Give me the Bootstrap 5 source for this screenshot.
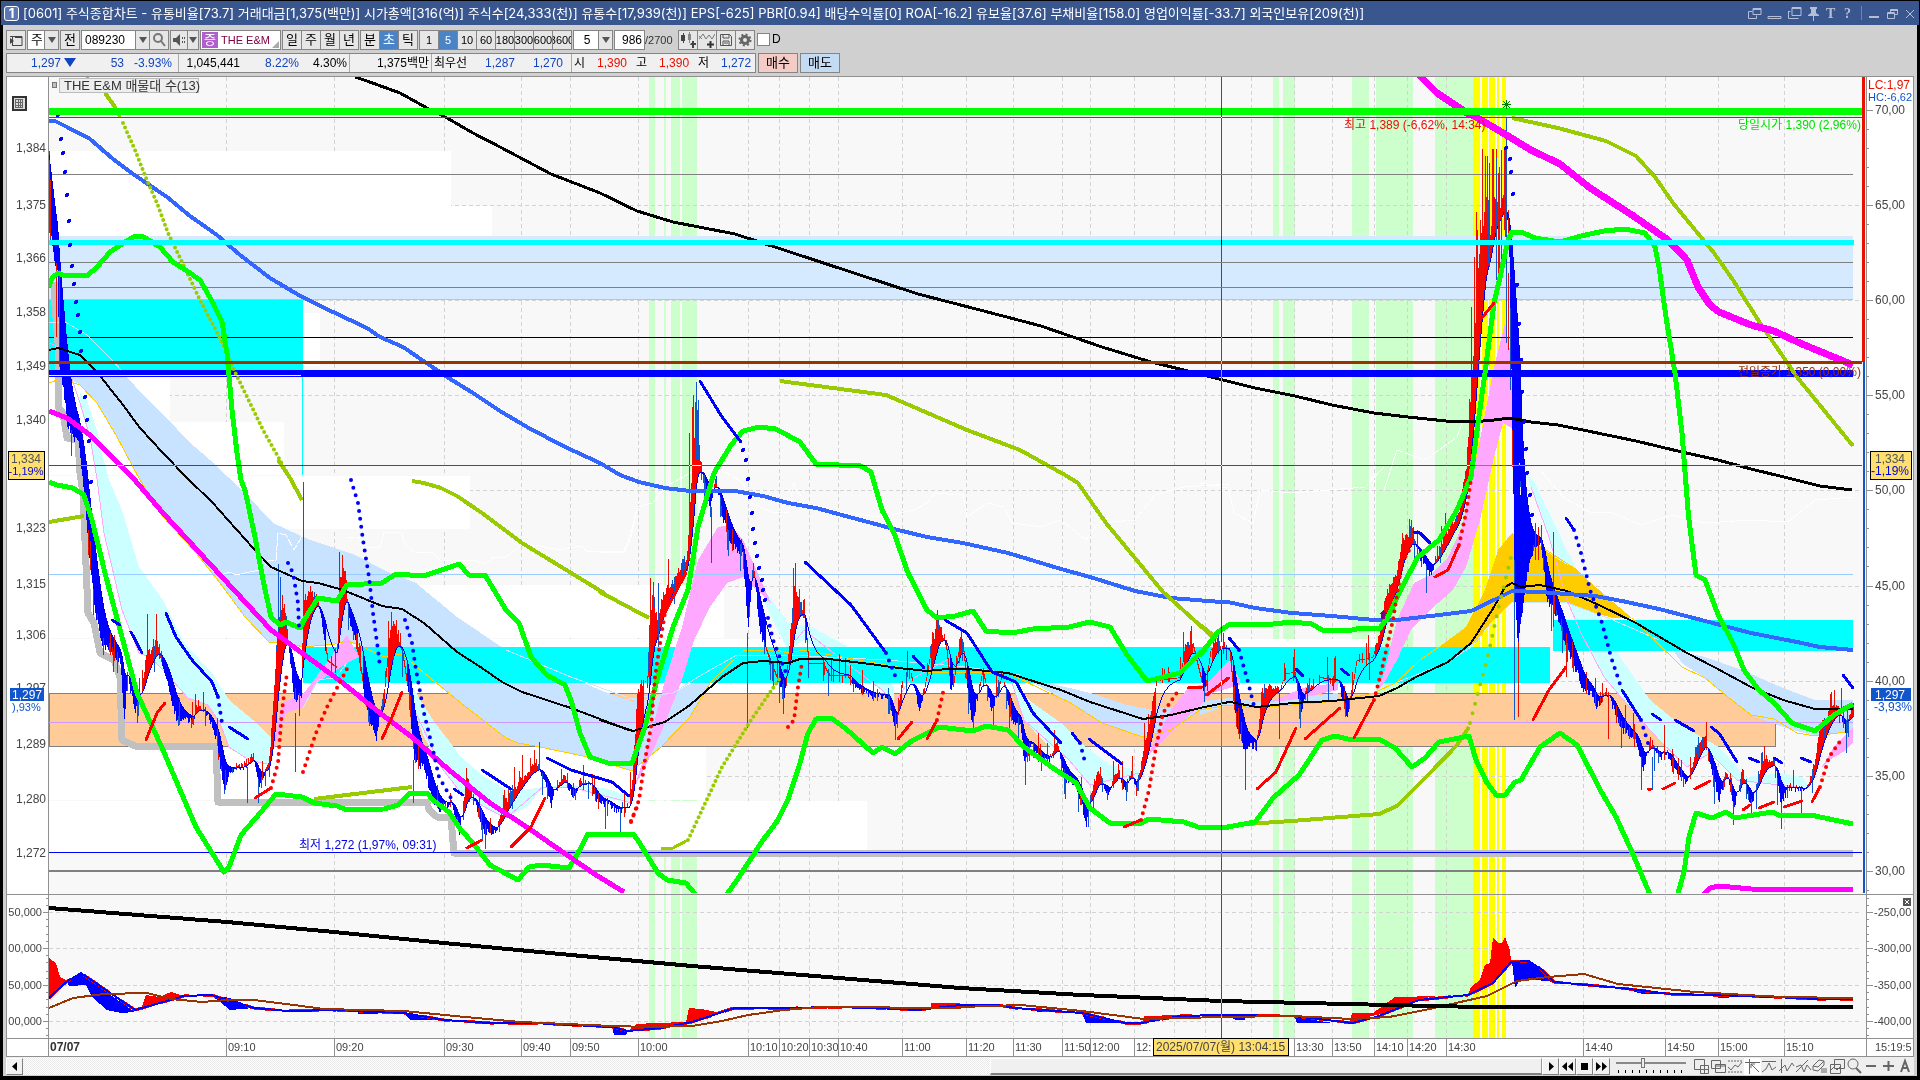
<!DOCTYPE html>
<html lang="ko">
<head>
<meta charset="utf-8">
<meta name="viewport" content="width=device-width, initial-scale=1">
<title>[0601] 주식종합차트</title>
<link href="https://cdn.jsdelivr.net/npm/bootstrap@5.3.0/dist/css/bootstrap.min.css" rel="stylesheet">
<style>
:root{--ui:"Liberation Sans","Noto Sans CJK KR",sans-serif}
body{background:#000;font:12px/18px var(--ui);color:#000;padding:1px 1px 3px}
button,input,select{font:inherit;color:inherit;border-radius:0;margin:0}
svg{display:block}
.titlebar{height:24px;background:#39568f;color:#fff;padding:0 4px 0 3px;font:13px/18px Inter,"Noto Sans CJK KR",sans-serif}
.titlebar .num{width:15px;height:15px;border:1px solid #fff;border-radius:3px;font-weight:bold;line-height:13px;text-align:center;background:#5b78b4}
.frame-body{background:#d0d0d0;margin:0 2px;padding:5px 3px 1px}
.tool{height:20px;border:1px solid #858585;background:#e6e6e6;padding:0;line-height:18px;text-align:center;flex:none;overflow:hidden;white-space:nowrap;display:flex;align-items:center;justify-content:center}
.tool+.tool{margin-left:-1px}
.tool.on{background:#4a84c6;color:#fff}
.tool.gap-after{margin-right:2px}
.digits{font-size:11px}
.kr{font-size:13px}
.field{background:#fff;text-align:left;justify-content:flex-start}
.w11{width:12px}.w14{width:15px}.w17{width:18px}.w19{width:20px}.w25{width:26px}.w29{width:31px}.w54{width:55px}
input.field,select.field{appearance:none;outline:0;padding:0 2px 0 3px;display:block}
input.end{text-align:right}
.total{width:33px;flex:none;font-size:11px;line-height:20px;color:#333}
.arrow::before{content:"";border:4px solid transparent;border-top:6px solid #555;border-bottom:0}
.stock{width:81px;background:#fff;color:#800040;justify-content:flex-start;position:relative}
.stock b{background:#b060cc;color:#fff;width:16px;height:16px;line-height:15px;font-size:13px;font-weight:normal;margin:0 3px 0 1px}
.stock::after{content:"";position:absolute;right:1px;bottom:1px;border-left:7px solid transparent;border-bottom:7px solid #aaa}
.quote-row{margin-top:3px}
.quote{height:20px;border:1px solid #858585;background:#f0f0f0;width:750px;line-height:18px}
.quote>div{border-right:1px solid #aaa;height:18px;white-space:nowrap;flex:none;text-align:right}
.quote>div:last-child{border:0;flex:1 1 0;text-align:left;padding-left:2px}
.quote span{display:inline-block}
.q-last{width:172px;padding-right:6px}.q-vol{width:171px;padding-right:2px}.q-amt{width:82px;padding-right:2px}.q-ask{width:140px;padding-right:8px}
.c40{width:42px;text-align:right;margin-right:9px}.c48{width:48px}.c59{width:59px}
.dn{color:#1144c0}.up{color:#e81000}
.tri::before{content:"";display:inline-block;border:6px solid transparent;border-top:9px solid #1144c0;border-bottom:0;margin-left:3px}
.trade{width:40px;height:20px;border:1px solid #858585;line-height:18px;padding:0;font-size:13px}
.buy{background:#f5cbc6;margin:0 2px}.sell{background:#c4dcf3}
.chartbox{background:#fff;margin-top:3px}
.chartbox svg{width:100%;height:auto}
.scroller{height:18px;background:#eee}
.scroller .track{flex:0 0 967px;height:18px;background:repeating-conic-gradient(#fff 0 25%,#e9e9e9 0 50%) 0 0/2px 2px}
.scroller .thumb{flex:1 1 0;height:17px;border:1px solid #999;border-top-color:#fff;border-left-color:#fff;border-bottom:2px solid #808080;background:#f0f0f0}
.scroller button{width:17px;height:17px;padding:0;border:1px solid;border-color:#fff #808080 #808080 #fff;background:#f2f2f2;display:flex;align-items:center;justify-content:center;flex:none}
.scroller .tools button{border:0;background:none}
.slide{width:70px;margin:0 7px 0 6px;height:17px}
.slide input{appearance:none;display:block;width:70px;height:10px;background:linear-gradient(#888,#888) 0 4px/100% 2px no-repeat}
.slide input::-webkit-slider-thumb{appearance:none;width:4px;height:10px;background:#eee;border:1px solid #777}
.slide i{display:block;height:3px;margin:2px 2px 0;background:repeating-linear-gradient(90deg,#000 0 1px,transparent 1px 7px)}
.chk{appearance:none;width:13px;height:13px;border:1px solid #858585;background:#fff;margin:3px 2px 0 0}
</style>
<script src="https://cdn.jsdelivr.net/npm/bootstrap@5.3.0/dist/js/bootstrap.bundle.min.js"></script>
</head>
<body>
<header class="titlebar d-flex align-items-center">
  <span class="num me-1">1</span>
  <span class="text-nowrap flex-grow-1">[0601] 주식종합차트 - 유통비율[73.7] 거래대금[1,375(백만)] 시가총액[316(억)] 주식수[24,333(천)] 유통수[17,939(천)] EPS[-625] PBR[0.94] 배당수익률[0] ROA[-16.2] 유보율[37.6] 부채비율[158.0] 영업이익률[-33.7] 외국인보유[209(천)]</span>
  <svg width="168" height="22" viewBox="1746 1 168 22" fill="none" stroke="#b4bfd6" stroke-width="1">
    <path d="M1752 7.500h8v6h-8zM1752 8.500h8M1751.500 10.500h-4v7h8v-3M1767 15.500h13v2h-13zM1791 6.500h9v8h-9zM1791 7.500h9M1787.500 10v7.500h10M1787.500 10.500h2"/>
    <path d="M1809 6h7v2h-1v4l3 2v1h-11v-1l3-2v-4h-1zM1812 15h1v5h-1z" fill="#b4bfd6" stroke="none"/>
    <path d="M1860.500 5v14" stroke="#7385ad"/>
    <path d="M1868 16h10" stroke-width="2"/>
    <path d="M1889.500 11V8.500h7v5h-3M1889 9.500h8M1886.500 11.500h7v6h-7zM1886 12.500h8M1905 9l8 8M1913 9l-8 8"/>
    <text x="1825" y="17" font-family="Liberation Serif" font-weight="bold" font-size="14" fill="#b4bfd6" stroke="none">T</text>
    <text x="1843" y="17" font-family="Liberation Serif" font-weight="bold" font-size="14" fill="#b4bfd6" stroke="none">?</text>
  </svg>
</header>
<main class="frame-body">
  <div class="d-flex align-items-start" role="toolbar">
    <button class="tool w19 gap-after" aria-label="패널"><svg width="14" height="14" fill="none" stroke="#444"><path d="M1 3.500h12v9H3.500M3.500 3v10M6 4.500h7"/><path d="M1 5v6l4-3z" fill="#444" stroke="none"/></svg></button>
    <select class="tool field w17 kr" aria-label="구분"><option>주</option></select><button class="tool w14 gap-after" aria-label="구분 열기"><i class="arrow d-flex"></i></button>
    <button class="tool w19 kr gap-after">전</button>
    <input class="tool field w54" value="089230" aria-label="종목코드"><button class="tool w14" aria-label="최근 종목"><i class="arrow d-flex"></i></button><button class="tool w19 gap-after" aria-label="종목 검색"><svg width="14" height="14" fill="none" stroke="#777" stroke-width="2"><circle cx="6" cy="5" r="4"/><path d="M9 8l4 5"/></svg></button>
    <button class="tool w17" aria-label="음성"><svg width="14" height="14" fill="#555"><path d="M1 5h3l4-4v12L4 9H1zM10 4h1v2h-1zM12 4h1v2h-1zM10 8h1v2h-1zM12 8h1v2h-1z"/></svg></button><button class="tool w11 gap-after" aria-label="음성 설정"><i class="arrow d-flex"></i></button>
    <div class="tool stock gap-after digits"><b>증</b>THE E&amp;M</div>
    <button class="tool w19 kr">일</button><button class="tool w19 kr">주</button><button class="tool w19 kr">월</button><button class="tool w19 kr gap-after">년</button>
    <button class="tool w19 kr">분</button><button class="tool w19 kr on">초</button><button class="tool w19 kr gap-after">틱</button>
    <button class="tool w19 digits">1</button><button class="tool w19 digits on">5</button><button class="tool w19 digits">10</button><button class="tool w19 digits">60</button><button class="tool w19 digits">180</button><button class="tool w19 digits">300</button><button class="tool w19 digits">600</button><button class="tool w19 digits gap-after">3600</button>
    <input class="tool field w25" value="  5" aria-label="주기"><button class="tool w14 gap-after" aria-label="주기 열기"><i class="arrow d-flex"></i></button>
    <input class="tool field end w29" value="986" aria-label="개수"><span class="total">/2700</span>
    <button class="tool w19" aria-label="봉 추가"><svg width="16" height="16" fill="#444"><path d="M3 1h1v2h1v6H4v2H3V9H1V3h2zM11 11h1v-2h2v2h2v2h-2v3h-2v-3h-2z"/><path d="M8 2h3v6H8zM9 0h1v11H9z" fill="#888"/></svg></button><button class="tool w19" aria-label="지표 추가"><svg width="16" height="16" fill="none" stroke="#777"><path d="M0 7l4-5 3 5 3-4 3 4 3-5M0 4l3 3"/><path d="M11.500 9v7M8 12.500h7" stroke="#333" stroke-width="2"/></svg></button><button class="tool w19" aria-label="저장"><svg width="14" height="14" fill="none" stroke="#555"><path d="M1.500 1.500h9l2 2v9h-11zM4 1v4h6V1M4 13V8h6v5M5 10h4"/></svg></button><button class="tool w19 gap-after" aria-label="설정"><svg width="14" height="14" fill="none" stroke="#666"><circle cx="7" cy="7" r="3.500" stroke-width="3"/><circle cx="7" cy="7" r="5.500" stroke-width="2" stroke-dasharray="2 2.300"/></svg></button>
    <input class="chk" type="checkbox" id="optd"><label for="optd">D</label>
  </div>
  <div class="quote-row d-flex">
    <div class="quote d-flex">
      <div class="dn q-last"><span>1,297<i class="tri"></i></span><span class="c48">53</span><span class="c48">-3.93%</span></div>
      <div class="q-vol"><span>1,045,441</span><span class="dn c59">8.22%</span><span class="c48">4.30%</span></div>
      <div class="q-amt">1,375백만</div>
      <div class="dn q-ask"><span class="text-black">최우선</span><span class="c48">1,287</span><span class="c48">1,270</span></div>
      <div class="up"><span class="text-black">시</span><span class="c40">1,390</span><span class="text-black">고</span><span class="c40">1,390</span><span class="text-black">저</span><span class="c40 dn">1,272</span></div>
    </div>
    <button class="trade buy">매수</button><button class="trade sell">매도</button>
  </div>
  <div class="chartbox"><svg id="chart" viewBox="6 76 1908 981" shape-rendering="crispEdges" font-family="Liberation Sans, Noto Sans CJK KR, sans-serif" font-size="12"></svg></div>
  <div class="scroller d-flex align-items-center">
    <button aria-label="왼쪽"><svg width="8" height="9"><path d="M6 0v9L1 4.500z"/></svg></button>
    <div class="track"></div><div class="thumb"></div>
    <button aria-label="재생"><svg width="8" height="9"><path d="M2 0v9l5-4.500z"/></svg></button>
    <button aria-label="뒤로"><svg width="11" height="9"><path d="M5 0v9L0 4.500zM11 0v9L6 4.500z"/></svg></button>
    <button aria-label="정지"><svg width="7" height="7"><path d="M0 0h7v7H0z"/></svg></button>
    <button aria-label="앞으로"><svg width="11" height="9"><path d="M0 0v9l5-4.500zM6 0v9l5-4.500z"/></svg></button>
    <div class="slide"><input type="range" aria-label="간격" value="38"><i></i></div>
    <div class="tools d-flex" id="tools"></div>
  </div>
</main>
<script>
const NS='http://www.w3.org/2000/svg', root=document.getElementById('chart');
let target=root;
function el(n,a,t){const e=document.createElementNS(NS,n);for(const k in a)e.setAttribute(k,a[k]);if(t!==undefined)e.textContent=t;target.appendChild(e);return e}
// Traces are stored per tile: origin and units per pixel
const tiles={S:[0,0,.81667,.81667],A:[0,60,3,3],B:[0,460,2.45,3],C:[600,360,2.45,3],D:[1200,90,2.17778,3],E:[1200,460,2.17778,3],F:[0,880,1.63333,3],G:[960,880,1.63333,3],Z:[1400,0,3,3]};
function pts(s){const out=[];let t=null;for(const w of s.trim().split(/\s+/)){if(tiles[w]){t=tiles[w];continue}const[x,y]=w.split(',').map(Number);out.push([Math.round(t[0]+x/t[2]),Math.round(t[1]+y/t[3])])}return out}
const str=p=>p.map(q=>q.join(',')).join(' ');
const line=(s,c,w=1,x={})=>s.split('|').forEach(k=>el('polyline',{points:str(pts(k)),fill:'none',stroke:c,'stroke-width':w,'stroke-linejoin':'round',...x}));
const area=(s,c)=>s.split('|').forEach(k=>el('polygon',{points:str(pts(k)),fill:c}));
const rect=(x,y,x2,y2,c,o={})=>el('rect',{x,y,width:x2-x,height:y2-y,fill:c,...o});
const hl=(y,x2,c,w=1,x=49)=>rect(x,y-Math.floor(w/2),x2,y-Math.floor(w/2)+w,c);
const text=(x,y,s,c='#444',o={})=>el('text',{x,y,fill:c,...o},s);

rect(49,76,1866,1038,'#f8f8f8');
const defs=el('defs',{});target=defs;
const cp=el('clipPath',{id:'plot'});target=cp;rect(49,77,1862,893,'#000');target=root;

const yMain=[110,205,300,395,490,586,681,776,871], ySub=[912,948,985,1021];
const times=[[226,'09:10'],[334,'09:20'],[444,'09:30'],[521,'09:40'],[570,'09:50'],[638,'10:00'],[748,'10:10'],[779,'10:20'],[809,'10:30'],[838,'10:40'],[902,'11:00'],[966,'11:20'],[1013,'11:30'],[1062,'11:50'],[1090,'12:00'],[1134,'12:'],[1174],[1205],[1251],[1294,'13:30'],[1332,'13:50'],[1374,'14:10'],[1407,'14:20'],[1446,'14:30'],[1583,'14:40'],[1665,'14:50'],[1718,'15:00'],[1784,'15:10']];
const grid={stroke:'#d3d3d3','stroke-dasharray':'4 3'};
// session bands
[[649,655],[664,666],[671,680],[682,697],[1273,1279],[1283,1295],[1352,1369],[1376,1413],[1435,1473]].forEach(b=>rect(b[0],77,b[1],1038,'#ccffcc'));
[[1473,1480],[1482,1488],[1489,1495],[1497,1499],[1502,1506]].forEach(b=>rect(b[0],77,b[1],1038,'#ffff00'));
[...yMain,...ySub].forEach(y=>el('line',{x1:49,x2:1862,y1:y+.5,y2:y+.5,...grid}));
times.forEach(t=>el('line',{x1:t[0]+.5,x2:t[0]+.5,y1:77,y2:1037,...grid}));
// volume profile
[[151,206,451],[206,236,492],[313,366,320],[377,422,170],[422,475,284],[476,529,470],[529,585,276],[585,638,724],[639,693,1375],[746,800,706],[801,852,867]].forEach(r=>rect(49,r[0],r[2],r[1],'#fff'));
rect(49,236,1853,300,'#d5eaff');hl(299,1853,'#99ccff');
rect(49,300,303,370,'#00ffff');
rect(49,693,1775,746,'#ffcc99',{stroke:'#808080'});

target=el('g',{'clip-path':'url(#plot)'});
// slow cloud
area('A 160,930 200,950 240,975 290,1030 350,1130 420,1260 B 400,170 480,280 540,370 600,470 660,545 700,548 745,562 820,552 850,543 880,555 940,590 985,583 1040,640 1130,730 1240,835 1270,850 1310,857 1440,890 1548,933 C 80,1230 150,1160 220,1070 270,970 230,965 180,1000 80,1025 0,990 B 1400,650 1240,570 1120,470 1020,370 950,335 870,285 760,240 670,190 600,100 515,0 A 560,1140 500,1075 430,1005 380,950 365,932|C 1040,965 1100,970 1200,1000 1290,1035 1345,1048 1420,1040 1500,1020 1568,1010 E 65,710 125,725 200,715 300,700 300,722 200,735 120,745 60,735 0,765 C 1470,1050 1400,1110 1330,1130 1230,1090 1150,1025 1060,970|E 1030,570 1100,590 1180,630 1270,685 1340,720 1422,720 1422,812 1340,828 1270,800 1200,765 1150,710 1100,655 1050,610','#c8e3ff');
// fast clouds
area('A 240,1000 260,1020 290,1110 310,1190 328,1260 B 300,150 340,320 400,420 450,550 520,640 560,720 620,780 665,830 665,915 610,900 560,860 540,790 510,735 460,715 400,630 370,595 340,580 300,450 255,220 230,0 A 270,1130 240,1030|B 1005,670 1060,780 1130,890 1180,945 1250,995 1330,980 1290,1040 1240,1075 1200,1050 1130,1000 1080,920 1040,830 1005,720|B 1330,980 1400,975 1480,985 1548,1010 1548,1030 1480,1015 1400,980|C 410,700 460,790 520,800 600,855 660,910 720,980 720,1030 690,990 600,905 540,870 500,840 460,870 400,720|C 1010,970 1060,1030 1130,1090 1190,1160 1250,1215 1320,1230 1320,1250 1200,1275 1150,1200 1090,1150 1040,1080|D 710,1145 730,1180 755,1258 E 820,330 870,460 920,600 980,720 1040,790 1090,830 1130,860 1190,950 1260,940 1310,950 1330,985 1260,970 1200,970 1170,960 1110,880 1060,920 1000,840 940,750 880,650 830,520 790,380 760,230 720,80','#ccffff');
area('E 520,561 580,500 620,390 650,270 680,220 700,245 740,258 770,290 820,330 850,365 900,425 940,475 900,475 860,460 800,430 760,425 680,425 640,480 600,550 580,561','#ffcc00');
rect(303,647,1550,683,'#00ffff');rect(1553,620,1853,651,'#00ffff');
area('B 665,890 690,730 745,700 770,660 850,525 880,590 850,610 780,665 740,745 700,760 680,830|C 80,1290 120,1150 160,960 200,800 240,600 290,500 320,495 350,540 380,620 420,730 350,650 310,670 270,740 230,840 200,960 150,1120 110,1220|C 1340,1190 1400,1050 1440,985 1490,970 1540,900 1568,960 1568,975 1500,1000 1450,1060 1380,1140|E 385,690 400,640 430,480 465,370 500,345 540,290 570,200 600,0 D 610,1050 640,830 665,700 690,900 700,1030 660,1000 640,1100 E 610,180 580,320 550,390 500,450 460,510 430,600 400,670|E 150,725 230,680 300,670 300,690 200,720|E 1350,930 1380,860 1422,800 1422,850 1400,875 1370,900','#ffa8ff');
hl(174,1853,'#808080');hl(262,1853,'#808080');hl(287,1853,'#808080');hl(337,1853,'#000');
hl(574,1853,'#99ccff');hl(722,1853,'#cc99ff');hl(871,1862,'#808080',2);
line('A 163,665 163,700 173,850 173,1040 190,1060 200,1135 235,1140 240,1240 B 203,100 215,460 230,490 245,580 280,600 295,650 300,840 330,858 528,858 535,1025 1045,1025 1050,1050 1070,1070 1105,1075 1113,1178 E 1422,1178','#c0c0c0',7);
hl(852,1862,'#0000ff');
line('A 147,785 200,790 260,825 330,895 365,932|B 1240,570 1400,650 1568,725|C 0,990 40,1022 180,1000 240,950 330,888 460,885 700,900 900,920 1030,945|E 400,680 470,645 540,605 590,560 640,480 680,425 800,430 900,480 1000,540|B 742,745 780,660 820,655 850,610','#cfe6ff');
line('A 147,970 180,957 240,975 290,1030 350,1130 420,1260 B 400,170 480,280 540,370 600,470 660,545 700,548 745,562 820,552 850,543 880,555 940,590 985,583 1040,640 1130,730 1240,835 1270,850 1310,857 1440,890 1548,933 C 80,1230 150,1160 220,1070 270,970 350,872 430,870 460,880 500,870 700,915 800,935 1000,940 1100,1000 1150,1025 1230,1090 1330,1130 1400,1110 1470,1050 E 60,735 120,745 200,735 300,722 380,700 430,665 480,600 520,561|E 740,258 820,330|E 940,475 1050,620 1100,655 1150,710 1200,765 1250,778 1300,820 1340,828 1422,812','#ffcc00');
line('A 150,850 190,870 210,940 240,1030 270,1130 290,1258 B 255,220 300,450 340,580 370,595 400,630 460,715 510,735 540,790 560,860 610,900 665,915|B 1005,720 1080,920 1130,1000 1200,1050 1240,1075 1330,980 1400,980 1548,1030|C 460,870 500,810 600,905 690,990 720,1030 760,960 850,900|C 1010,970 1040,1080 1150,1200 1200,1275 1320,1240|E 720,80 760,230 800,420 830,520 880,650 940,750 1000,840 1060,920 1110,880 1170,960 1300,980','#ffa8ff');
// white trace
line('B 545,345 560,335 580,345 610,335 640,330 660,300 675,300 680,220 700,225 720,270 735,240 742,210|B 850,230 880,232 890,262 930,265 940,215 985,220 990,245 1015,275 1060,280 1080,302 1160,300 1185,312 1210,290 1240,290 1280,255 1320,258 1370,270 1420,258 1440,275 1530,272 1545,220 1560,150|C 0,575 60,580 75,530 90,440 130,430 160,380 220,340 280,330 310,340 350,370 370,430 420,455 460,460 475,370 500,430 600,460 690,470 770,450 800,430 820,400 890,405 900,470 950,430 990,440 1010,490 1080,500 1130,480 1190,540 1220,490 1310,480 1360,405 1430,380 1540,372|E 0,70 60,85 75,160 115,190 130,90 200,100 280,90 360,80 400,20|E 740,30 790,110 850,155 900,160 960,195 1030,165 1100,190 1200,180 1280,185 1340,120 1422,110|D 400,1200 430,1080 490,1110 560,1040 570,1000','#fff',1,{'stroke-dasharray':'9 1'});

// price ribbon against its lagging average
const price=pts('A 148,285 151,500 165,620 172,640 178,900 190,980 200,1090 215,1130 235,1140 B 207,100 218,300 235,470 250,560 275,570 295,600 305,780 312,640 330,760 345,690 360,580 385,550 405,640 430,770 470,780 485,730 510,770 530,830 548,1000 560,930 600,915 620,880 635,975 660,900 668,720 682,480 695,440 705,540 720,720 738,700 742,420 760,390 780,420 800,600 823,620 832,350 845,330 855,480 875,560 900,760 920,830 940,680 955,500 968,500 985,580 1000,700 1015,900 1040,920 1060,1030 1080,1050 1105,1020 1125,1120 1145,960 1160,1010 1185,1115 1215,1110 1240,1020 1270,970 1300,920 1320,915 1350,1030 1365,970 1385,950 1402,1010 1420,960 1445,970 1465,1030 1490,1030 1510,1050 1540,1040 C 80,1220 90,1000 115,950 128,700 140,780 155,700 180,660 212,590 225,330 234,130 245,310 270,440 285,350 300,470 320,550 348,580 362,800 374,600 390,800 410,880 450,1010 475,680 500,760 510,910 545,910 560,945 605,945 625,985 670,1005 705,1005 722,1120 740,960 760,940 785,1050 810,860 828,790 845,840 860,1000 885,820 900,980 912,1090 935,930 960,1050 985,940 1010,1090 1030,1090 1040,1210 1055,1150 1075,1190 1100,1200 1120,1150 1140,1260 1165,1270 1190,1390 1200,1320 1218,1230 1245,1300 1270,1220 1285,1290 1300,1230 1312,1290 1335,1150 1350,1050 1362,960 1420,950 1430,860 1450,850 1480,1000 1495,870 1510,840 1540,870 E 78,790 98,880 110,850 122,860 135,690 160,680 175,680 185,640 205,635 220,760 230,690 260,650 300,660 320,770 340,600 375,590 390,520 405,400 425,350 440,240 460,220 480,290 500,340 520,270 545,200 565,150 580,20 D 595,800 608,500 620,370 630,450 640,330 655,350 663,300 670,420 680,700 690,1000 700,1255 E 692,550 710,350 725,260 740,240 755,420 775,460 800,560 820,640 835,690 850,690 862,740 885,690 900,740 915,800 950,840 965,930 980,840 1000,890 1015,870 1040,950 1060,970 1085,850 1100,830 1115,940 1130,1020 1145,930 1162,1045 1180,930 1200,1035 1225,900 1250,905 1265,1035 1280,975 1300,985 1320,985 1335,920 1350,800 1375,750 1390,740 1405,810 1422,740');
let seed=7;const rnd=()=>(seed=(seed*16807)%2147483647)/2147483647;
const px=[];let j=0;
for(let x=49;x<=1853;x++){while(j<price.length-2&&price[j+1][0]<=x)j++;const a=price[j],b=price[j+1],f=b[0]===a[0]?1:(x-a[0])/(b[0]-a[0]);px.push(a[1]+(b[1]-a[1])*Math.max(0,Math.min(1,f)))}
let ema=px[0],sig=[];px.forEach(v=>{ema+=(v-ema)*.12;sig.push(Math.round(ema))});
let red='',blue='',thin='',bars={r:'',b:''};
px.forEach((v,i)=>{const x=49+i+.5,n=Math.round(v+(rnd()-.5)*8),s=sig[i],inBand=x>303&&x<1550&&v>647&&v<683;
 if(inBand)thin+=`M${x} ${Math.round(px[i-1])}V${Math.round(v)+1}`;
 else if(n<s)red+=`M${x} ${n}V${s}`;else blue+=`M${x} ${s}V${n+1}`;
 const r=rnd();if(r<.26){const k=r<.13?'r':'b',d=Math.round(rnd()*24);bars[k]+=`M${x} ${n-(k==='r'?d:4)}V${n+(k==='r'?5:d)}`}});
el('path',{d:red,stroke:'#ff0000'});el('path',{d:blue,stroke:'#0000ff'});el('path',{d:thin,stroke:'#e81000'});
el('path',{d:bars.r,stroke:'#e81000'});el('path',{d:bars.b,stroke:'#1155cc'});
el('polyline',{points:sig.map((v,i)=>(49+i)+','+v).join(' '),fill:'none',stroke:'#0000e0'});
const vbar=(t,c)=>t.split('|').forEach(k=>{const p=pts(k);el('path',{d:`M${p[0][0]+.5} ${p[0][1]}V${p[1][1]}`,stroke:c})});
vbar('A 147,300 147,520|A 150,360 150,530|A 168,610 168,830|A 177,630 177,900|B 743,65 743,600|B 605,920 605,1028|B 1013,900 1013,1028|B 831,275 831,450|B 359,462 359,580|B 381,462 381,560|B 950,483 950,600|B 963,483 963,600|C 219,220 219,600|C 225,140 225,500|C 229,105 229,400|C 232,125 232,320|C 237,150 237,320|C 123,655 123,900|C 131,665 131,860|C 478,610 478,760|C 472,625 472,780|D 604,420 604,800|D 609,390 609,700|D 614,177 614,640|D 620,198 620,460|D 625,198 625,430|D 630,220 630,530|D 635,177 635,380|D 639,177 639,450|D 644,177 644,400|D 649,250 649,560|D 655,180 655,560|D 661,177 661,420|D 664,177 664,440|D 600,365 600,800|D 591,650 591,1000|D 596,500 596,900|D 680,935 680,1130|D 671,550 671,780|E 692,500 692,770|E 768,215 768,500|E 797,520 797,650|E 888,700 888,838|E 1010,795 1010,900|E 730,190 730,300|E 736,200 736,300|E 1397,685 1397,760','#e81000');
vbar('B 680,312 680,530|B 722,760 722,935|B 685,350 685,480|C 234,65 234,300|C 240,120 240,300|C 360,820 360,1103|C 273,440 273,610|C 143,670 143,860|C 449,960 449,1063|C 1195,1340 1195,1400|D 667,83 667,760|D 644,200 644,570|D 652,230 652,570|D 628,330 628,520|D 676,560 676,900|E 684,0 684,780|E 97,870 97,990|E 960,900 960,990|E 985,890 985,990|E 173,700 173,838|E 1407,780 1407,878','#1155cc');
area('D 676,560 682,600 692,1000 700,1258 E 705,200 712,350 700,480 692,560 686,400 682,0','#0000ff');
rect(302,370,303,475,'#00ffff');

// moving averages and envelopes
line('A 147,870 175,865 240,885 290,935 370,1035 420,1105 490,1180 565,1258 B 520,125 620,265 665,322 740,362 780,368 840,390 935,437 985,448 1040,490 1120,575 1180,625 1230,665 1280,695 1400,745 1540,810 C 0,1080 80,1113 160,1085 220,1035 300,950 350,910 400,902 460,908 490,898 560,898 680,915 730,925 800,932 850,928 900,928 1000,940 1130,990 1200,1027 1330,1076 1400,1065 1470,1045 1540,1027 E 65,725 125,742 200,730 288,722 390,708 430,685 470,650 540,605 590,550 640,440 665,380 680,370 700,380 740,375 800,393 870,435 950,490 1060,580 1120,620 1200,680 1270,720 1340,748 1422,748','#000',2);
line('A 1065,50 1100,62 1200,98 1280,143 1340,173 1420,218 1500,260 S 450,142 490,158 520,172 550,181 600,191 640,204 700,224 750,240 800,253 850,266 900,283 940,296 970,303 D 50,870 120,895 206,919 288,944 380,970 452,981 536,993 595,997 640,991 675,985 720,995 780,1005 834,1021 950,1052 1050,1087 1129,1110 1200,1137 1272,1162 1350,1187 1420,1201','#000',3);
line('A 147,183 165,183 200,200 270,236 340,298 400,342 500,410 570,468 650,525 720,584 810,654 905,710 1000,756 1100,803 1140,830 1210,862 1275,905 1340,950 1420,1000 1500,1052 S 430,349 460,364 C 0,308 50,345 95,367 160,385 220,394 330,393 400,407 460,430 530,443 620,474 720,508 800,532 890,548 1000,580 1130,626 1200,652 1310,693 1400,713 1522,727 E 60,426 120,444 200,458 288,468 380,480 430,479 520,465 590,452 640,420 680,394 740,395 800,402 860,409 920,424 1000,447 1100,484 1200,520 1300,546 1350,560 1422,570','#3366ff',4);
hl(373,1853,'#0000ff',7);hl(375,301,'#ccffff');
line('A 260,50 263,58|A 315,98 345,140 360,170|B 680,0 710,55 740,120|B 120,187 205,167|B 770,1018 1010,980|B 1010,63 1040,68 1080,83 1120,107 1180,160 1280,250 1380,325 1480,400 C 0,695 120,775|C 440,62 700,105 900,210 1030,270 1140,345 1170,370 1240,490 1380,695 1505,835|E 0,495 38,535|E 100,1092 200,1083 390,1062 430,1038 500,938 560,855 585,800|D 680,83 780,115 885,153 950,197 990,262 1030,340 1120,490 1160,570 1220,700 1300,860 1422,1067','#99cc00',4);
const dots={'stroke-linecap':'round','shape-rendering':'auto'};
line('A 370,190 405,270 437,355 470,430 505,520 545,605 600,720 665,845 700,925 740,1010 790,1110 870,1255|C 215,1440 250,1350 300,1220 370,1080 440,955','#99cc00',4,{...dots,'stroke-dasharray':'0 5'});
line('E 588,790 600,720 625,600 650,450 680,280','#99cc00',4,{...dots,'stroke-dasharray':'0 10'});
line('C 215,1440 180,1465 150,1467','#99cc00',3);
line('A 147,682 155,655 175,640 190,646 260,648 290,622 330,575 375,545 405,527 425,527 480,562 520,605 560,632 600,660 640,730 665,785 680,880 695,1050 710,1180 722,1260 B 600,90 625,230 645,360 665,470 685,495 700,487 735,503 745,480 780,415 825,423 850,375 935,370 970,342 1040,347 1125,313 1150,344 1188,344 1240,450 1272,490 1300,590 1340,645 1385,675 1400,720 1420,820 1445,890 1490,908 1548,908 C 78,1208 110,1100 140,960 180,800 215,690 240,500 280,340 320,255 350,212 390,200 430,208 490,245 530,313 640,317 665,335 690,450 720,520 755,640 800,750 825,773 870,768 915,754 945,812 1010,820 1060,807 1150,802 1200,786 1250,802 1290,885 1340,963 1420,940 1470,880 E 0,585 40,515 65,493 160,492 200,487 245,492 265,510 330,510 350,505 390,508 410,470 440,380 475,290 520,240 560,150 590,50 D 605,1000 620,850 640,640 655,550 670,450 680,425 700,427 730,445 785,455 830,438 880,422 925,416 970,430 990,470 1000,530 1015,680 1035,850 1050,1030 1062,1260 E 1065,180 1080,345 1100,360 1130,470 1160,550 1185,630 1215,688 1250,730 1290,790 1340,812 1380,765 1422,732','#00ff00',5);
line('B 120,65 140,75 180,85 205,105 225,180 260,350 300,530 335,700 400,870 440,990 480,1100 520,1180 548,1235 560,1220 590,1125 640,1055 675,1003 740,1010 770,1030 825,1037 850,1050 940,1048 975,1035 1005,1000 1045,1000 1060,1020 1100,1055 1130,1110 1160,1150 1200,1215 1270,1260 1295,1222 1325,1216 1395,1225 1415,1180 1440,1123 1550,1123 C 95,1445 F 1075,-20 1090,0 1120,10 1135,42|F 1188,42 1203,0 C 400,1440 430,1390 460,1320 490,1210 510,1120 530,1078 565,1073 600,1105 670,1180 690,1160 722,1183 760,1145 830,1100 915,1112 945,1098 1000,1110 1040,1160 1110,1225 1165,1270 1200,1345 1250,1390 1320,1393 1345,1377 1430,1385 1465,1402 1540,1402 E 47,1103 120,1085 160,1015 215,945 265,840 295,828 330,840 390,838 425,865 462,920 490,895 520,845 585,828 600,900 625,970 645,1005 665,1005 685,965 700,960 740,860 785,820 820,855 875,1000 905,1070 940,1175 982,1310|E 1038,1310 1055,1235 1065,1130 1080,1060 1115,1075 1145,1055 1165,1075 1245,1056 1265,1068 1330,1064 1380,1080 1422,1092','#00ff00',5);
line('A 147,1053 200,1075 270,1125 330,1185 400,1255 B 400,160 545,350 665,510 740,578 830,660 930,760 1010,830 1100,930 1200,1030 1300,1110 1390,1185 1460,1245 1530,1297|E 1090,1310 1110,1283 1130,1279 1200,1287 1422,1291','#ff00ff',5);
line('Z 50,218 110,280 200,340 D 600,82 660,130 720,180 785,222 850,295 940,375 1020,450 1060,510 1085,590 1110,645 1130,665 1200,705 1250,723 1310,763 1422,825','#ff00ff',7);
hl(242,1854,'#00ffff',5);
// stop markers
const dot=(s,c)=>pts(s).forEach(p=>el('circle',{cx:p[0],cy:p[1],r:2,fill:c}));
dot('A 175,165 183,237 189,280 195,336 201,405 207,483 211,555 216,618 222,672 229,727 234,765 240,816 243,873 255,1010 261,1080 267,1143 B 222,66 C 350,270 358,300 363,357 368,411 373,459 376,507 380,548 385,588 390,625 396,660 400,690 405,720 D 667,175 675,207 678,246 682,312 690,585 695,702 699,810 701,906 705,997 710,1077 713,1148 718,1215 E 723,165','#0000ff');
line('B 275,480 295,495|B 322,515 348,580|B 407,458 430,530 470,600 520,665 535,710|B 560,800 608,838|B 1112,988 1135,1005|B 1180,930 1252,988|B 1340,893 1400,930 1500,965 1542,1008|C 245,62 300,170 345,245|C 502,607 615,735 700,880|C 767,888 795,925|C 845,780 900,820 960,935 1020,965 1060,1060 1130,1150|C 1157,1118 1175,1150|C 1197,1136 1280,1213|C 1540,835 E 65,537 85,570|E 210,628 225,648|E 308,628 325,645|E 465,215 480,220 500,250|E 797,175 815,210|E 920,690 960,780|E 985,762 1005,780|E 1035,780 1075,812|E 1113,800 1130,820 1170,905|E 1195,893 1218,905|E 1250,893 1268,910|E 1308,893 1330,907|E 1400,645 1422,685','#0000ff',3,{'stroke-linecap':'round'});
line('B 535,710 545,790|B 705,308 717,340 730,430 733,500|B 860,60 878,130 890,240 905,350 915,460 925,570 932,620|B 992,480 1010,550 1020,630 1040,760 1060,870 1075,950 1105,1015|C 412,775 425,840 455,940|C 700,880 725,955|C 1175,1150 1188,1205|E 85,570 105,665 120,750|E 815,210 830,280 850,390 875,490 895,590 920,690|E 960,780 975,850','#0000ff',4,{...dots,'stroke-dasharray':'0 8'});
line('B 357,840 385,760 405,730|B 625,1015 665,985|B 935,838 960,770 985,695|B 1145,1165 1180,1140|B 1253,1160 1300,1100 1335,1015|C 730,1137 765,1085|C 800,1137 825,1080|C 160,760 180,710 210,640|C 1285,1402 1325,1380|C 1440,985 1475,980|C 1485,1005 1540,955|E 15,705 62,655|E 125,987 165,935 210,805|E 228,838 305,745|E 335,833 380,720|E 512,350 540,330 565,255|E 725,780 760,690 797,620|E 975,987 983,987|E 1008,987 1035,970|E 1077,987 1110,962|E 1182,1050 1197,1035|E 1218,1045 1250,1025|E 1272,1040 1310,1022|E 1333,1025 1350,980|D 615,685 640,640','#ff0000',3,{'stroke-linecap':'round'});
line('B 665,985 680,910 690,750 703,640|B 742,935 775,820 800,740 855,615|B 1545,1083 1560,1040|C 75,1385 95,1320 110,1200 125,1100 135,950 150,830 160,760|C 460,1102 475,1080 485,980 495,910|C 825,1080 843,985|C 1325,1380 1345,1290 1360,1180 1380,1060 1420,985|E 380,720 395,640 420,480 440,310 462,255|E 565,255 580,160 590,60|E 1350,980 1370,890 1397,840','#ff0000',4,{...dots,'stroke-dasharray':'0 7'});
hl(362,1862,'#993300',3);hl(117,1862,'#ff0000');hl(111,1862,'#00ff00',7);
el('path',{d:'M1506.500 100v9M1502 104.500h9M1503 101l7 7M1510 101l-7 7',stroke:'#008000'});
el('path',{d:'M1383 610l4 4h-2v5h-4v-5h-2z',fill:'#800080'});
target=root;

// lower pane
area('F 80,235 92,250 98,290 107,300 95,330 80,355|F 230,390 238,345 260,350 280,335 300,348 265,370|F 1028,450 1040,432 1070,428 1120,425 1125,385 1145,388 1170,395 1195,382 1215,383 1180,395 1130,425 1080,445|F 1520,370 1568,370 1568,378 1520,385|G 297,428 300,408 360,405 330,415|G 637,425 640,398 675,398 710,352 780,348 750,358 700,400 680,405|G 830,345 835,320 850,300 857,255 865,250 870,175 880,190 885,190 890,172 898,210 900,245 870,310','#ff0000');
area('F 110,305 132,278 150,305 200,370 220,395 197,400 175,390 150,350 140,315 112,318|F 345,346 375,355 415,385 375,390 360,365|F 585,392 620,397 615,402 585,402|F 660,400 725,420 670,421|F 1000,440 1028,450 1022,466 1003,466|G 902,245 930,243 950,265 970,305 940,300 915,300 907,325|G 90,383 200,398 130,395|G 200,400 270,430 205,430|G 440,408 467,410 465,420 450,420|G 547,410 610,428 550,428|G 1080,325 1160,342 1115,343|G 1230,347 1270,350 1240,353','#0000ff');
const base='F 80,355 107,305 132,278 220,390 300,348 345,346 415,385 470,392 550,390 660,400 725,420 800,430 870,430 1000,440 1025,452 1080,445 1130,425 1200,385 1300,383 1350,380 1430,385 1500,390 1568,375 G 60,375 90,385 200,400 270,430 295,430 360,407 427,405 545,408 640,428 680,410 750,360 830,345 870,310 900,245 930,243 950,270 970,305 1080,325 1160,342 1230,345 1330,352 1400,358 1458,357';
line(base,'#ff0000',3,{'stroke-dasharray':'30 14'});
line(base,'#0000ff',2);
line('F 80,383 120,355 170,341 240,338 280,358 330,367 370,360 415,360 480,375 530,388 660,392 760,411 850,425 1000,438 1060,442 1130,437 1180,422 1222,405 1280,390 1340,382 1568,384 G 0,380 100,375 200,392 300,417 427,410 540,408 640,417 700,412 760,390 860,348 910,303 960,290 1020,282 1075,313 1200,335 1340,350 1458,355','#993300',2);
line('F 80,84 370,125 546,156 726,188 932,225 1130,258 1370,293 1568,325 G 200,346 427,363 700,375 850,380 1458,381','#000',4);

// price notes
text(1344,129,'최고 1,389 (-6,62%, 14:34)','#e81000');
text(1738,129,'당일시가 1,390 (2,96%)','#00e000');
text(1738,376,'전일종가 1,350 (0,00%)','#993300');
text(299,849,'최저 1,272 (1,97%, 09:31)','#0000e0');
rect(52,82,56,87,'#c0c0c0',{stroke:'#777'});
rect(59,78,198,92,'#eee',{stroke:'#bbb'});
text(64,90,'THE E&M 매물대 수(13)','#333',{'font-size':13});

// axes
rect(6,76,49,1038,'#fff');rect(1866,76,1914,1057,'#fff');rect(6,1038,1914,1057,'#fff');
rect(1862,77,1865,362,'#e81000');rect(1863,362,1865,893,'#1155cc');
const ax='#909090';
[[6,76,1914,77],[6,76,7,1057],[48,76,49,1038],[1866,76,1867,1057],[1913,76,1914,1057],[6,894,1914,895],[6,1038,1914,1039],[6,1056,1914,1057]].forEach(r=>rect(...r,ax));
yMain.forEach((y,i)=>{rect(1867,y,1873,y+1,ax);for(let k=1;k<5;k++)if(y+19*k<893)rect(1867,y+19*k,1869,y+19*k+1,ax);text(1875,y+4,(70-5*i)+',00')});
const small={'font-size':11};
ySub.forEach((y,i)=>{rect(1867,y,1873,y+1,ax);rect(43,y,48,y+1,ax);for(let k=-2;k<3;k++){rect(1867,y+7*k,1869,y+7*k+1,ax);rect(46,y+7*k,48,y+7*k+1,ax)}text(1874,y+4,'-'+(250+50*i)+',00','#444',small);text(42,y+4,(i%2?'00':'50')+',000','#444',{'text-anchor':'end',...small})});
[[147,384],[204,375],[257,366],[311,358],[365,349],[419,340],[527,323],[583,315],[634,306],[687,297],[743,289],[798,280],[852,272]].forEach(l=>text(46,l[0]+5,'1,'+l[1],'#444',{'text-anchor':'end'}));
text(50,1051,'07/07','#333',{'font-weight':'bold'});
rect(48,1038,49,1056,ax);
times.forEach(t=>{if(t[1]){rect(t[0],1039,t[0]+1,1056,ax);text(t[0]+2,1051,t[1],'#444',small)}});
text(1875,1051,'15:19:5','#444',small);
text(1868,89,'LC:1,97','#e81000');text(1868,101,'HC:-6,62','#1155cc',small);
// crosshair
const x={style:'mix-blend-mode:difference'};
rect(1221,77,1222,1038,'#00ffff',x);rect(49,465,1862,466,'#00ffff',x);
// value tags
const tag=(x,y,x2,y2,c,s)=>rect(x+.5,y+.5,x2+.5,y2+.5,c,s?{stroke:s}:{});
tag(8,451,44,479,'#ffdf6e','#000');tag(1870,451,1911,479,'#ffdf6e','#000');
const mid={'text-anchor':'middle'};
text(26,463,'1,334','#555',mid);text(26,475,'-1,19%','#0000e0',{...mid,...small});
text(1890,463,'1,334','#555',mid);text(1890,475,'-1,19%','#0000e0',mid);
rect(10,688,44,701,'#1155cc');text(27,699,'1,297','#fff',mid);text(12,711,'),93%','#1155cc',small);
rect(1871,688,1911,701,'#1155cc');text(1890,699,'1,297','#fff',mid);text(1874,711,'-3,93%','#1155cc');
tag(1153,1038,1288,1055,'#ffdf6e','#000');text(1156,1051,'2025/07/07(월) 13:04:15','#444');
// corner glyphs
rect(12.5,96.500,25.500,109.500,'#ddd',{stroke:'#333','stroke-width':2});
el('path',{d:'M15.500 99.500h7v8h-7zM15 102.500h8M15 105.500h8M18.500 99v9M20.500 99v9',stroke:'#666',fill:'none'});
rect(1903,898,1911,906,'#555');el('path',{d:'M1905 900l4 4M1909 900l-4 4',stroke:'#fff'});

// drawing tools
const icons=['<path d="M1.500 1.500h10v10h-10zM7.500 7.500h8v8h-8zM7 11.500h9M11.500 7v9"/>','<path d="M1.500 2.500h9v8h-9z"/><path d="M5.500 6.500h10v8h-10zM5 8h11"/>','<path d="M1 3h14M1 14h14" stroke-dasharray="2 1"/><path d="M1 9l3 3 4-5 3 2 4-5"/>','<path d="M1 4.500h15M5.500 1v15M7 6l8 8M7 6h4M7 6v4"/>','<path d="M1 3.500h14M1 14l4-3 3-6 3 7 4-3"/>','<path d="M3.500 1v14M1 13l6-6 2 6 5-8 2 3"/>','<path d="M1 14L13 2M1 9l5-2 3 7 3-7 4 5"/>','<path d="M1 8l6-6 5 1v4l-6 6-5-1zM1 8l5 1 6-6"/><path d="M10 10v5M12 10v5M14 10v5"/>','<path d="M5.500 1.500h10v9h-10zM1.500 6.500h10v9h-10z"/><path d="M2 12l3-3 3 3 3-3"/>','<circle cx="7" cy="6" r="5"/><path d="M10 10l5 5" stroke-width="2"/>','<path d="M3 8h10" stroke-width="2"/>','<path d="M3 8h11M8.500 3v10" stroke-width="2"/>','<path d="M4 14L8 3l4 11M5 10h6" stroke-width="2"/>'];
document.getElementById('tools').innerHTML=icons.map((d,i)=>`<button aria-label="도구 ${i+1}"${i===3?' class="bg-white"':''}><svg width="17" height="17" fill="none" stroke="#666">${d}</svg></button>`).join('');
</script>
</body>
</html>
